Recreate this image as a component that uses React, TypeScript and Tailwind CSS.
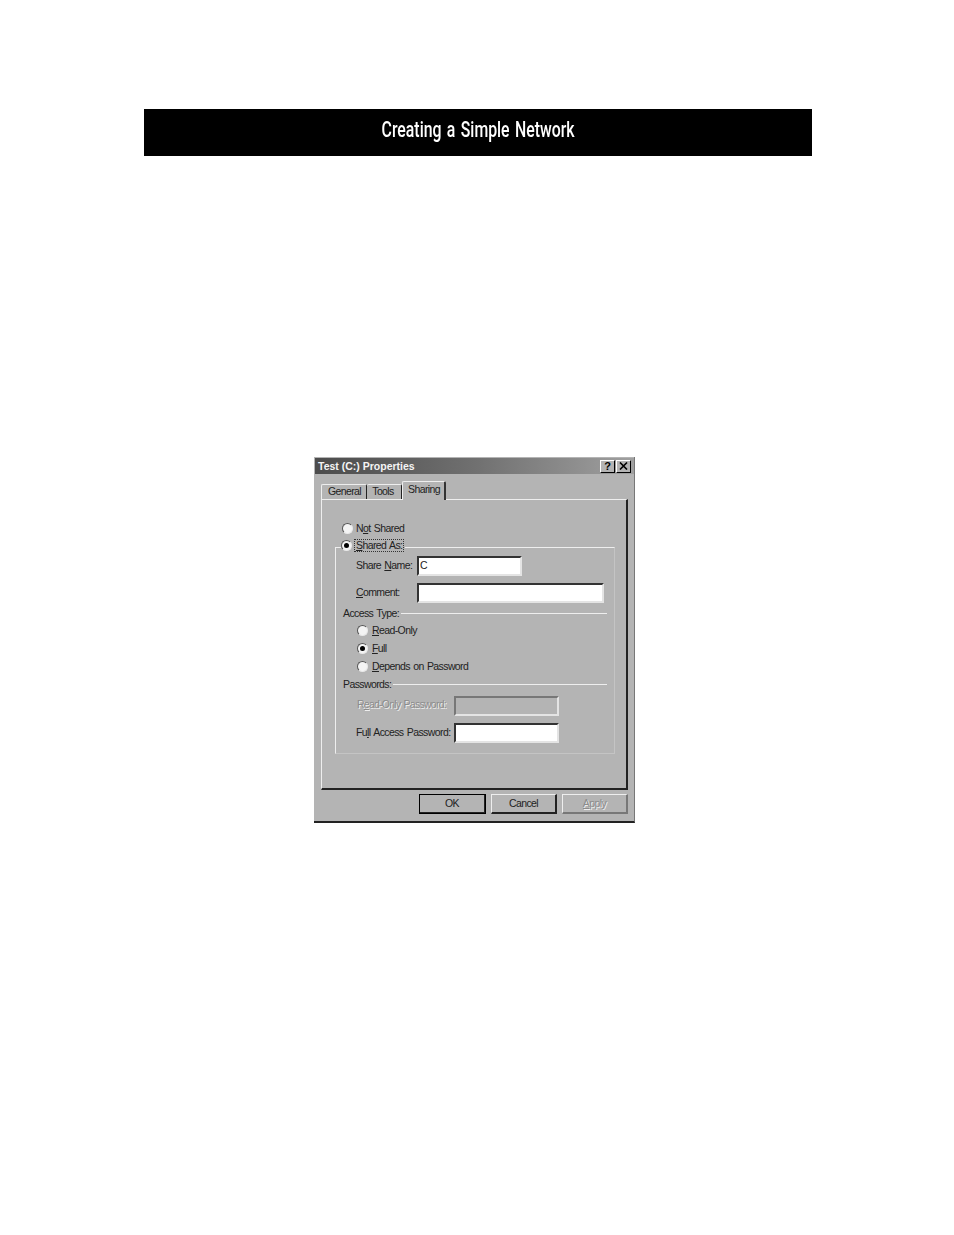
import type { ReactNode } from 'react'

// ─── Win95 bits ───────────────────────────────────────────────────────────────

function Radio({ checked = false }: { checked?: boolean }) {
  return (
    <span className="flex h-[11px] w-[11px] shrink-0 items-center justify-center rounded-full border border-b-[#e8e8e8] border-l-[#555] border-r-[#e8e8e8] border-t-[#555] bg-[#f4f4f4]">
      {checked && <span className="h-[5px] w-[5px] rounded-full bg-black" />}
    </span>
  )
}

function RadioRow({ checked, children }: { checked?: boolean; children: ReactNode }) {
  return (
    <div className="flex h-[18px] items-center gap-[4px] pl-[21px]">
      <Radio checked={checked} />
      <span>{children}</span>
    </div>
  )
}

function Input({ width, disabled, children }: { width: string; disabled?: boolean; children?: ReactNode }) {
  return (
    <div
      className={`${width} h-[20px] border-2 border-b-[#e4e4e4] border-l-[#333] border-r-[#e4e4e4] border-t-[#333] pl-[1px] leading-[14px] ${
        disabled ? 'border-l-[#777] border-t-[#777] bg-[#b4b4b4]' : 'bg-white'
      }`}
    >
      {children}
    </div>
  )
}

function SectionLabel({ children }: { children: ReactNode }) {
  return (
    <div className="mr-[7px] flex h-[16px] items-center gap-[2px] pl-[7px]">
      <span>{children}</span>
      <div className="h-px flex-1 bg-[#eeeeee]" />
    </div>
  )
}

function Button({ children, isDefault, disabled }: { children: ReactNode; isDefault?: boolean; disabled?: boolean }) {
  return (
    <div
      className={`flex h-[20px] items-center justify-center border-b-2 border-l border-r-2 border-t border-b-[#222] border-l-[#eeeeee] border-r-[#222] border-t-[#eeeeee] pb-[1px] ${
        isDefault ? 'w-[67px] outline outline-1 outline-black -outline-offset-1' : 'w-[66px]'
      } ${disabled ? 'border-b-[#777] border-r-[#777] text-[#8c8c8c] [text-shadow:1px_1px_0_#eeeeee]' : ''}`}
    >
      {children}
    </div>
  )
}

function TitleButton({ children }: { children: ReactNode }) {
  return (
    <div className="flex h-[13px] w-[15px] items-center justify-center border-b border-l border-r border-t border-b-black border-l-white border-r-black border-t-white bg-[#b4b4b4] text-[11px] font-bold leading-none text-black">
      {children}
    </div>
  )
}

// ─── Pagina ───────────────────────────────────────────────────────────────────

export default function App() {
  return (
    <div className="h-[1235px] overflow-hidden bg-white pl-[144px] pt-[109px] font-['Liberation_Sans',sans-serif]">
      {/* Kopbalk */}
      <div className="flex h-[47px] w-[668px] items-center justify-center bg-black pb-[6px] font-['Roboto',sans-serif] text-[22px] font-medium text-white">
        <span className="scale-x-[0.72] whitespace-nowrap [word-spacing:2px]">Creating a Simple Network</span>
      </div>

      {/* Dialoog */}
      <div className="ml-[170px] mt-[301px] h-[366px] w-[321px] border-b-2 border-r border-b-[#222] border-r-[#777] bg-[#b4b4b4] pl-[1px] pt-px text-[10.5px] leading-[14px] tracking-[-0.6px] text-[#222] [word-spacing:1px]">
        <div className="flex h-[16px] items-center justify-between bg-gradient-to-r from-[#4c4c4c] via-[#707070] to-[#a0a0a0] pl-[3px] pr-[3px] font-bold tracking-normal text-[#f4f4f4] [word-spacing:0]">
          <span className="text-[10.5px]">Test (C:) Properties</span>
          <div className="flex gap-[1px]">
            <TitleButton>?</TitleButton>
            <TitleButton>
              <svg width="9" height="8" viewBox="0 0 9 8" stroke="black" strokeWidth="1.6">
                <path d="M1 0.5 8 7.5M8 0.5 1 7.5" />
              </svg>
            </TitleButton>
          </div>
        </div>

        {/* Tabs */}
        <div className="ml-[6px] mt-[6px] flex h-[19px] items-end">
          <div className="flex h-[15px] w-[46px] items-center justify-center rounded-t-[2px] border-l border-r border-t border-l-[#eeeeee] border-r-[#222] border-t-[#eeeeee] pb-[2px] pl-[1px]">
            General
          </div>
          <div className="flex h-[15px] w-[35px] items-center justify-center rounded-t-[2px] border-r border-t border-r-[#222] border-t-[#eeeeee] pb-[2px] pr-[2px]">
            Tools
          </div>
          <div className="relative top-px z-10 flex h-[19px] w-[44px] items-center justify-center rounded-t-[2px] border-l border-r-2 border-t border-l-[#eeeeee] border-r-[#333] border-t-[#eeeeee] bg-[#b4b4b4] pb-[5px] pl-[1px]">
            Sharing
          </div>
        </div>

        {/* Paneel */}
        <div className="ml-[6px] h-[291px] w-[307px] border-b-2 border-l border-r-2 border-t border-b-[#222] border-l-[#eeeeee] border-r-[#222] border-t-[#eeeeee] pl-[13px] pt-[19px]">
          <div className="-ml-[14px] h-[21px] [&>div]:gap-[3px]">
            <RadioRow>
              N<u>o</u>t Shared
            </RadioRow>
          </div>

          <fieldset className="relative -top-[1px] h-[215px] w-[280px] border border-b-[#c4c4c4] border-l-[#eeeeee] border-r-[#c4c4c4] border-t-[#eeeeee]">
            <legend className="relative -top-[2px] ml-[5px] flex h-[16px] items-center gap-[2px] pr-[1px]">
              <Radio checked />
              <span className="border border-dotted border-[#333] px-px leading-[11px]">
                <u>S</u>hared As:
              </span>
            </legend>

            <div className="mt-[1px] flex h-[20px] items-center pl-[20px]">
              <span className="w-[61px] pb-[2px]">
                Share <u>N</u>ame:
              </span>
              <Input width="w-[105px]">C</Input>
            </div>
            <div className="mt-[7px] flex h-[20px] items-center pl-[20px]">
              <span className="w-[61px] pb-[2px]">
                <u>C</u>omment:
              </span>
              <Input width="w-[187px]" />
            </div>

            <div className="mt-[2px]">
              <SectionLabel>Access Type:</SectionLabel>
            </div>
            <div>
              <RadioRow>
                <u>R</u>ead-Only
              </RadioRow>
              <RadioRow checked>
                <u>F</u>ull
              </RadioRow>
              <RadioRow>
                <u>D</u>epends on Password
              </RadioRow>
            </div>
            <div className="mt-[1px]">
              <SectionLabel>Passwords:</SectionLabel>
            </div>

            <div className="mt-[4px] flex h-[20px] items-center pl-[21px]">
              <span className="w-[97px] whitespace-nowrap pb-[4px] tracking-[-0.75px] text-[#8c8c8c] [text-shadow:1px_1px_0_#eeeeee]">
                R<u>e</u>ad-Only Password:
              </span>
              <Input width="w-[105px]" disabled />
            </div>
            <div className="mt-[7px] flex h-[20px] items-center pl-[20px]">
              <span className="w-[98px] whitespace-nowrap pb-[2px]">
                Fu<u>l</u>l Access Password:
              </span>
              <Input width="w-[105px]" />
            </div>
          </fieldset>
        </div>

        {/* Knoppen */}
        <div className="ml-[104px] mt-[4px] flex gap-[5px]">
          <Button isDefault>OK</Button>
          <Button>Cancel</Button>
          <Button disabled>
            <u>A</u>pply
          </Button>
        </div>
      </div>
    </div>
  )
}
